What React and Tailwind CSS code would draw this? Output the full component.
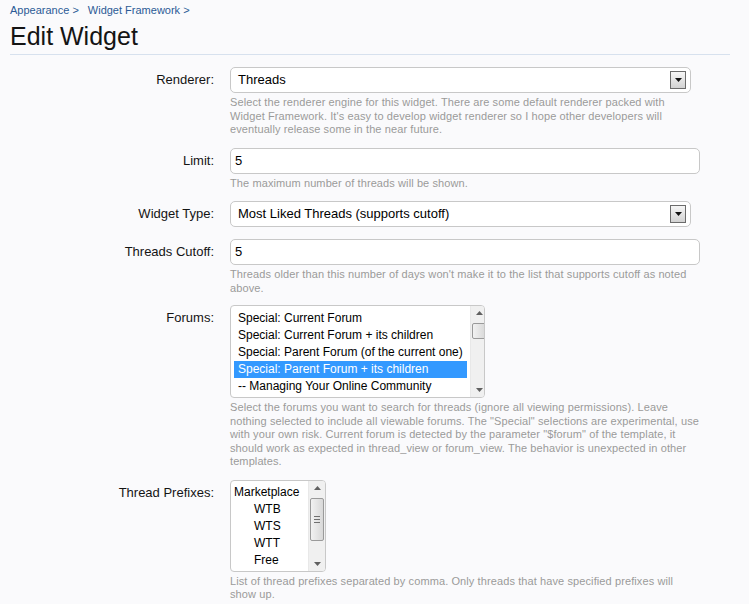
import React from 'react';

const font = { fontFamily: '"Liberation Sans", Arial, sans-serif' };

const Row = ({ label, children, className = '' }) => (
  <div className={`flex ${className}`}>
    <div className="w-[214px] shrink-0 text-right text-[13px] text-[#141414] leading-[16px] pt-[5px]">{label}</div>
    <div className="ml-[16px] flex-1">{children}</div>
  </div>
);

const Hint = ({ children, className = '' }) => (
  <p className={`w-[471px] text-[11px] leading-[13.5px] tracking-[0.1px] text-[#9a9a9a] ${className}`}>{children}</p>
);

const SelectBox = ({ value }) => (
  <div className="w-[461px] h-[26px] border border-[#c8c8c8] rounded-[5px] bg-white flex items-center justify-between pl-[7px] pr-[4px]">
    <span className="text-[13px] text-black">{value}</span>
    <span className="w-[16px] h-[18px] border border-[#6b6b6b] bg-gradient-to-b from-[#f6f6f6] to-[#d2d2d2] flex items-center justify-center">
      <svg width="7" height="4" viewBox="0 0 7 4"><path d="M0 0h7L3.5 4z" fill="#111" /></svg>
    </span>
  </div>
);

const TextInput = ({ value }) => (
  <div className="w-[470px] h-[26px] border border-[#c8c8c8] rounded-[5px] bg-white flex items-center pl-[4px] text-[13px] text-black">
    {value}
  </div>
);

const ScrollBar = ({ thumbTop, thumbHeight, grip }) => (
  <div className="w-[17px] h-full bg-[#f0f0f0] relative border-l border-[#e8e8e8]">
    <svg className="absolute left-[5px] top-[5px]" width="7" height="4" viewBox="0 0 7 4"><path d="M3.5 0L7 4H0z" fill="#606060" /></svg>
    <div
      className="absolute left-[1px] w-[14px] rounded-[2px] border border-[#9a9a9a] bg-gradient-to-r from-[#f2f2f2] to-[#d8d8d8] flex items-center justify-center"
      style={{ top: thumbTop, height: thumbHeight }}
    >
      {grip && (
        <div className="flex flex-col gap-[2px]">
          <div className="w-[6px] h-[1px] bg-[#707070]" />
          <div className="w-[6px] h-[1px] bg-[#707070]" />
          <div className="w-[6px] h-[1px] bg-[#707070]" />
        </div>
      )}
    </div>
    <svg className="absolute left-[5px] bottom-[5px]" width="7" height="4" viewBox="0 0 7 4"><path d="M0 0h7L3.5 4z" fill="#606060" /></svg>
  </div>
);

export default function App() {
  const forums = [
    'Special: Current Forum',
    'Special: Current Forum + its children',
    'Special: Parent Forum (of the current one)',
    'Special: Parent Forum + its children',
    '-- Managing Your Online Community',
  ];
  const prefixes = [
    { name: 'Marketplace', indent: false },
    { name: 'WTB', indent: true },
    { name: 'WTS', indent: true },
    { name: 'WTT', indent: true },
    { name: 'Free', indent: true },
  ];

  return (
    <div className="min-h-[604px] w-[749px] bg-[#fafafc] overflow-hidden" style={font}>
      <div className="px-[10px] pt-[3px]">
        <div className="text-[11px] text-[#2b5a96] flex gap-[9px] leading-[14px]">
          <span>Appearance &gt;</span>
          <span>Widget Framework &gt;</span>
        </div>
        <h1 className="text-[25px] leading-[30px] text-[#141414] mt-[4px]">Edit Widget</h1>
        <div className="w-[720px] h-[1px] bg-[#d7e1ee] mt-[3px]" />
      </div>

      <div className="mt-[12px]">
        <Row label="Renderer:">
          <SelectBox value="Threads" />
          <Hint className="mt-[3px]">
            Select the renderer engine for this widget. There are some default renderer packed with Widget Framework. It's easy to develop widget renderer so I hope other developers will eventually release some in the near future.
          </Hint>
        </Row>

        <Row label="Limit:" className="mt-[11px]">
          <TextInput value="5" />
          <Hint className="mt-[3px]">The maximum number of threads will be shown.</Hint>
        </Row>

        <Row label="Widget Type:" className="mt-[11px]">
          <SelectBox value="Most Liked Threads (supports cutoff)" />
        </Row>

        <Row label="Threads Cutoff:" className="mt-[12px]">
          <TextInput value="5" />
          <Hint className="mt-[3px]">
            Threads older than this number of days won't make it to the list that supports cutoff as noted above.
          </Hint>
        </Row>

        <Row label="Forums:" className="mt-[10px]">
          <div className="w-[255px] h-[93px] border border-[#c8c8c8] rounded-[4px] bg-white flex overflow-hidden">
            <div className="flex-1 pt-[4px] pl-[3px] pr-[3px]">
              {forums.map((f, i) => (
                <div
                  key={f}
                  className={`h-[17px] leading-[17px] text-[12px] px-[4px] whitespace-nowrap ${i === 3 ? 'bg-[#3399ff] text-white' : 'text-black'}`}
                >
                  {f}
                </div>
              ))}
            </div>
            <ScrollBar thumbTop={17} thumbHeight={16} />
          </div>
          <Hint className="mt-[3px]">
            Select the forums you want to search for threads (ignore all viewing permissions). Leave nothing selected to include all viewable forums. The "Special" selections are experimental, use with your own risk. Current forum is detected by the parameter "$forum" of the template, it should work as expected in thread_view or forum_view. The behavior is unexpected in other templates.
          </Hint>
        </Row>

        <Row label="Thread Prefixes:" className="mt-[11px]">
          <div className="w-[96px] h-[92px] border border-[#c8c8c8] rounded-[4px] bg-white flex overflow-hidden">
            <div className="flex-1 pt-[3px] pl-[3px]">
              {prefixes.map((p) => (
                <div
                  key={p.name}
                  className={`h-[17px] leading-[17px] text-[12px] text-black whitespace-nowrap ${p.indent ? 'pl-[20px]' : ''}`}
                >
                  {p.name}
                </div>
              ))}
            </div>
            <ScrollBar thumbTop={17} thumbHeight={43} grip />
          </div>
          <Hint className="mt-[3px]">
            List of thread prefixes separated by comma. Only threads that have specified prefixes will show up.
          </Hint>
        </Row>
      </div>
    </div>
  );
}
